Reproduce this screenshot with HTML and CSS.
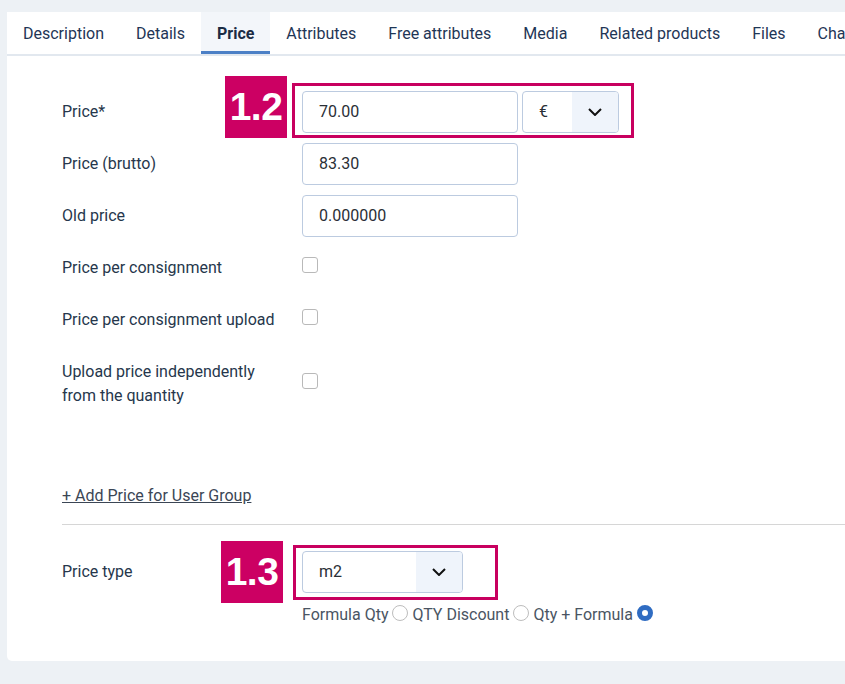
FILE: index.html
```html
<!DOCTYPE html>
<html>
<head>
<meta charset="utf-8">
<link rel="stylesheet" href="styles.css">
</head>
<body>
<div class="page">
  <nav class="tabs">
    <div class="tab">Description</div>
    <div class="tab">Details</div>
    <div class="tab active">Price</div>
    <div class="tab">Attributes</div>
    <div class="tab">Free attributes</div>
    <div class="tab">Media</div>
    <div class="tab">Related products</div>
    <div class="tab">Files</div>
    <div class="tab">Characteristics</div>
  </nav>
  <section class="panel">
    <div class="form">
      <div class="row">
        <div class="label">Price*</div>
        <div class="field marked">
          <div class="input">70.00</div>
          <div class="select currency">
            <span class="select-value">€</span>
            <span class="select-arrow"><svg width="14" height="8" viewBox="0 0 14 8"><polyline points="1,1 7,7 13,1" fill="none" stroke="#111" stroke-width="2"/></svg></span>
          </div>
          <div class="outline outline-12"></div>
          <div class="badge badge-12">1.2</div>
        </div>
      </div>
      <div class="row">
        <div class="label">Price (brutto)</div>
        <div class="field"><div class="input">83.30</div></div>
      </div>
      <div class="row">
        <div class="label">Old price</div>
        <div class="field"><div class="input">0.000000</div></div>
      </div>
      <div class="row">
        <div class="label">Price per consignment</div>
        <div class="field"><input type="checkbox" class="check"></div>
      </div>
      <div class="row">
        <div class="label">Price per consignment upload</div>
        <div class="field"><input type="checkbox" class="check"></div>
      </div>
      <div class="row">
        <div class="label">Upload price independently<br>from the quantity</div>
        <div class="field"><input type="checkbox" class="check"></div>
      </div>
    </div>

    <a class="add-link" href="#">+ Add Price for User Group</a>
    <hr class="divider">

    <div class="row type-row">
      <div class="label">Price type</div>
      <div class="field-col">
        <div class="field marked">
          <div class="select unit">
            <span class="select-value">m2</span>
            <span class="select-arrow"><svg width="14" height="8" viewBox="0 0 14 8"><polyline points="1,1 7,7 13,1" fill="none" stroke="#111" stroke-width="2"/></svg></span>
          </div>
          <div class="outline outline-13"></div>
          <div class="badge badge-13">1.3</div>
        </div>
        <div class="radios">
          <span>Formula Qty</span><input type="radio" name="pt" class="radio">
          <span>QTY Discount</span><input type="radio" name="pt" class="radio">
          <span>Qty + Formula</span><input type="radio" name="pt" class="radio" checked>
        </div>
      </div>
    </div>
  </section>
</div>
</body>
</html>
```

FILE: styles.css
```css
html, body {
  margin: 0;
  padding: 0;
}
body {
  background: #edf1f5;
  font-family: Roboto, "Liberation Sans", sans-serif;
  font-size: 16px;
  color: #26374c;
  overflow: hidden;
  width: 845px;
  height: 684px;
}
.page {
  padding: 12px 0 0 7px;
  width: 1000px;
}
.tabs {
  display: flex;
  background: #ffffff;
  border-bottom: 2px solid #e2e8ef;
  height: 42px;
}
.tab {
  padding: 1px 16px 0 16px;
  line-height: 41px;
  color: #1f3656;
  white-space: nowrap;
}
.tab.active {
  background: #f3f6fa;
  font-weight: 700;
  color: #1b2c44;
  box-shadow: inset 0 -3px 0 #4c80c6;
}
.panel {
  background: #ffffff;
  border-radius: 0 0 0 5px;
  padding: 35px 0 36px 55px;
}
.form {
  display: flex;
  flex-direction: column;
  gap: 10px;
}
.row {
  display: grid;
  grid-template-columns: 240px 1fr;
  align-items: center;
  min-height: 42px;
}
.label {
  line-height: 24px;
  padding: 9px 0;
  color: #26374c;
}
.field {
  display: flex;
  align-items: center;
  gap: 4px;
  position: relative;
  width: max-content;
}
.input {
  box-sizing: border-box;
  width: 216px;
  height: 42px;
  border: 1px solid #bccbe0;
  border-radius: 4px;
  padding: 0 16px;
  line-height: 40px;
  color: #2a2f36;
}
.select {
  box-sizing: border-box;
  height: 42px;
  border: 1px solid #bccbe0;
  border-radius: 4px;
  display: flex;
  overflow: hidden;
  color: #2a2f36;
}
.select-value {
  flex: 1;
  line-height: 40px;
  padding-left: 17px;
}
.select-arrow {
  width: 46px;
  background: #eff4fb;
  display: flex;
  align-items: center;
  justify-content: center;
}
.currency { width: 97px; }
.currency .select-value { padding-left: 16px; }
.unit { width: 161px; }
.unit .select-value { padding-left: 16px; }

.check {
  appearance: none;
  -webkit-appearance: none;
  box-sizing: border-box;
  width: 16px;
  height: 16px;
  margin: -7px 0 0 0;
  border: 1px solid #b9b9b9;
  border-radius: 3px;
  background: #fff;
}

.outline {
  position: absolute;
  box-sizing: border-box;
  border: 3px solid #c8005f;
  pointer-events: none;
}
.outline-12 { left: -10px; top: -8px; width: 342px; height: 55px; }
.outline-13 { left: -9px; top: -6px; width: 205px; height: 55px; }
.badge {
  position: absolute;
  width: 62px;
  height: 62px;
  background: #cc0063;
  color: #ffffff;
  font-family: "Liberation Sans", Arial, sans-serif;
  font-weight: 700;
  font-size: 39px;
  line-height: 62px;
  text-align: center;
  letter-spacing: -0.5px;
}
.badge-12 { left: -77px; top: -15px; }
.badge-13 { left: -81px; top: -10px; }

.add-link {
  display: block;
  width: max-content;
  margin-top: 67px;
  line-height: 24px;
  color: #3b4655;
  text-decoration: underline;
}
.divider {
  border: 0;
  border-top: 1px solid #d6d6d6;
  margin: 16px 0 26px 0;
  height: 0;
}
.type-row {
  align-items: start;
}
.type-row .label {
  padding-top: 9px;
}
.field-col {
  display: flex;
  flex-direction: column;
  gap: 12px;
}
.radios {
  display: flex;
  align-items: center;
  line-height: 20px;
  color: #4a5563;
}
.radio {
  appearance: none;
  -webkit-appearance: none;
  box-sizing: border-box;
  width: 16px;
  height: 16px;
  margin: -4px 4px 0 4px;
  border: 1px solid #bdbdbd;
  border-radius: 50%;
  background: #fff;
}
.radio:checked {
  border: 5px solid #2f6cc2;
}
```
